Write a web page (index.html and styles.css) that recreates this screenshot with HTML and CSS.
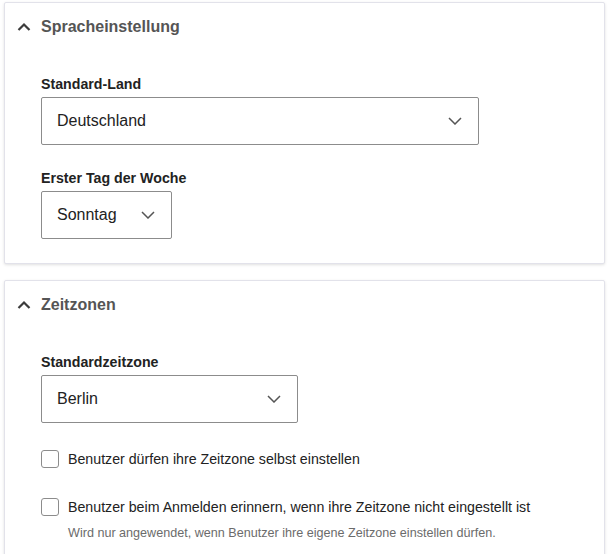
FILE: index.html
```html
<!DOCTYPE html>
<html lang="de">
<head>
<meta charset="utf-8">
<link rel="stylesheet" href="styles.css">
</head>
<body>
<div class="page">
  <section class="card">
    <header class="card-head">
      <svg class="caret" width="14" height="14" viewBox="0 0 14 14"><path d="M1.5 10 L7 4.5 L12.5 10" fill="none" stroke="#3c3c3c" stroke-width="2.2"/></svg>
      <span class="card-title">Spracheinstellung</span>
    </header>
    <div class="card-body">
      <div class="field">
        <label class="label">Standard-Land</label>
        <div class="select w-land"><span>Deutschland</span><svg class="chev" width="14" height="8" viewBox="0 0 14 8"><path d="M1 1 L7 7 L13 1" fill="none" stroke="#555" stroke-width="1.5"/></svg></div>
      </div>
      <div class="field">
        <label class="label">Erster Tag der Woche</label>
        <div class="select w-day"><span>Sonntag</span><svg class="chev" width="14" height="8" viewBox="0 0 14 8"><path d="M1 1 L7 7 L13 1" fill="none" stroke="#555" stroke-width="1.5"/></svg></div>
      </div>
    </div>
  </section>
  <section class="card">
    <header class="card-head">
      <svg class="caret" width="14" height="14" viewBox="0 0 14 14"><path d="M1.5 10 L7 4.5 L12.5 10" fill="none" stroke="#3c3c3c" stroke-width="2.2"/></svg>
      <span class="card-title">Zeitzonen</span>
    </header>
    <div class="card-body">
      <div class="field">
        <label class="label">Standardzeitzone</label>
        <div class="select w-tz"><span>Berlin</span><svg class="chev" width="14" height="8" viewBox="0 0 14 8"><path d="M1 1 L7 7 L13 1" fill="none" stroke="#555" stroke-width="1.5"/></svg></div>
      </div>
      <div class="check">
        <span class="box"></span>
        <div class="check-text"><div class="check-label">Benutzer dürfen ihre Zeitzone selbst einstellen</div></div>
      </div>
      <div class="check">
        <span class="box"></span>
        <div class="check-text">
          <div class="check-label">Benutzer beim Anmelden erinnern, wenn ihre Zeitzone nicht eingestellt ist</div>
          <div class="help">Wird nur angewendet, wenn Benutzer ihre eigene Zeitzone einstellen dürfen.</div>
        </div>
      </div>
    </div>
  </section>
</div>
</body>
</html>
```
FILE: styles.css
```css
html, body {
  margin: 0;
  padding: 0;
  background: #ffffff;
  font-family: "Liberation Sans", Arial, sans-serif;
  color: #222;
}
.page {
  padding: 2px 5px 0 4px;
  display: flex;
  flex-direction: column;
  gap: 16px;
}
.card {
  border: 1px solid #e2e2ea;
  border-radius: 2px;
  background: #fff;
  box-shadow: 0 1px 3px rgba(0, 0, 0, 0.12);
}
.card-head {
  display: flex;
  align-items: center;
  height: 48px;
  padding-left: 12px;
  gap: 10px;
}
.caret {
  display: block;
}
.card-title {
  font-size: 16px;
  font-weight: bold;
  color: #555;
  line-height: 20px;
}
.card-body {
  padding: 23px 36px 24px 36px;
}
.field + .field {
  margin-top: 23px;
}
.label {
  display: block;
  font-size: 14.2px;
  font-weight: bold;
  color: #222;
  line-height: 20px;
  margin-bottom: 3px;
}
.select {
  box-sizing: border-box;
  height: 48px;
  border: 1px solid #8c8c8c;
  border-radius: 2px;
  display: flex;
  align-items: center;
  justify-content: space-between;
  padding: 0 16px 0 15px;
  font-size: 16px;
  color: #222;
}
.w-land { width: 438px; }
.w-day { width: 131px; }
.w-tz { width: 257px; }
.chev { display: block; }
.check {
  display: flex;
  align-items: flex-start;
  gap: 9px;
  margin-top: 27px;
}
.check + .check {
  margin-top: 30px;
}
.box {
  box-sizing: border-box;
  width: 18px;
  height: 18px;
  border: 1px solid #8c8c8c;
  border-radius: 3px;
  flex: none;
}
.check-label {
  font-size: 14.2px;
  line-height: 18px;
  color: #222;
}
.help {
  font-size: 12.6px;
  line-height: 16px;
  color: #6b6b6b;
  margin-top: 9px;
}
```
